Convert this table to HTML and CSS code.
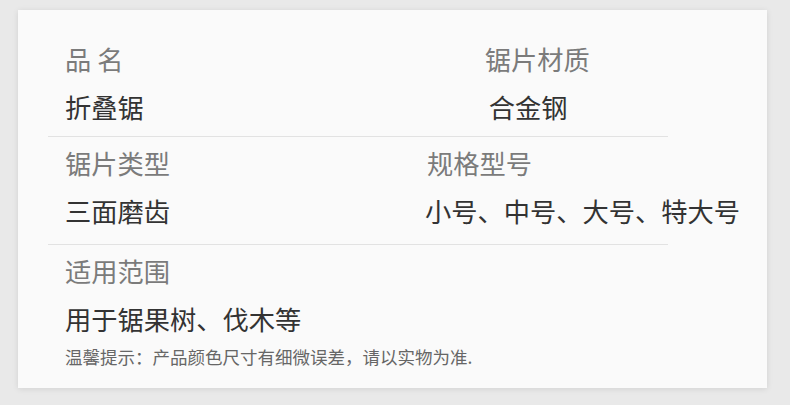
FILE: index.html
```html
<!DOCTYPE html>
<html lang="zh-CN">
<head>
<meta charset="utf-8">
<title>产品参数</title>
<link rel="stylesheet" href="styles.css">
</head>
<body>
<div class="card">
  <div class="row row-1">
    <div class="cell">
      <div class="label">品 名</div>
      <div class="value">折叠锯</div>
    </div>
    <div class="cell cell-right">
      <div class="label">锯片材质</div>
      <div class="value value-shift">合金钢</div>
    </div>
  </div>
  <div class="row row-2">
    <div class="cell">
      <div class="label">锯片类型</div>
      <div class="value">三面磨齿</div>
    </div>
    <div class="cell cell-right">
      <div class="label">规格型号</div>
      <div class="value value-back">小号、中号、大号、特大号</div>
    </div>
  </div>
  <div class="row row-3">
    <div class="cell">
      <div class="label">适用范围</div>
      <div class="value">用于锯果树、伐木等</div>
      <div class="note">温馨提示：产品颜色尺寸有细微误差，请以实物为准.</div>
    </div>
  </div>
</div>
</body>
</html>
```

FILE: styles.css
```css
html, body {
  margin: 0;
  padding: 0;
}
body {
  background: #e9e9e9;
  width: 790px;
  height: 405px;
  padding: 10px 0 0 18px;
  box-sizing: border-box;
  font-family: "Noto Sans CJK SC", "Noto Sans", sans-serif;
}
.card {
  width: 749px;
  height: 378px;
  box-sizing: border-box;
  background: #fafafa;
  box-shadow: 0 1px 6px rgba(0, 0, 0, 0.10);
  padding: 36px 0 0 30px;
}
.row {
  width: 620px;
  display: flex;
  box-sizing: border-box;
  padding-left: 17px;
}
.row-1 {
  padding-bottom: 16px;
  border-bottom: 1px solid #e2e2e2;
}
.row-2 {
  padding-top: 13px;
  padding-bottom: 20px;
  border-bottom: 1px solid #e2e2e2;
}
.row-3 {
  padding-top: 13px;
}
.cell {
  display: flex;
  flex-direction: column;
  gap: 22px;
  white-space: nowrap;
}
.row-1 .cell-right {
  margin-left: 341px;
}
.row-2 .cell-right {
  margin-left: 257px;
}
.label {
  font-size: 26.25px;
  line-height: 26px;
  color: #7b7b7b;
}
.value {
  font-size: 26.25px;
  line-height: 26px;
  color: #333333;
}
.value-shift {
  padding-left: 4px;
}
.value-back {
  margin-left: -2px;
}
.note {
  margin-top: -8px;
  font-size: 17.5px;
  line-height: 22px;
  color: #666666;
}
```
